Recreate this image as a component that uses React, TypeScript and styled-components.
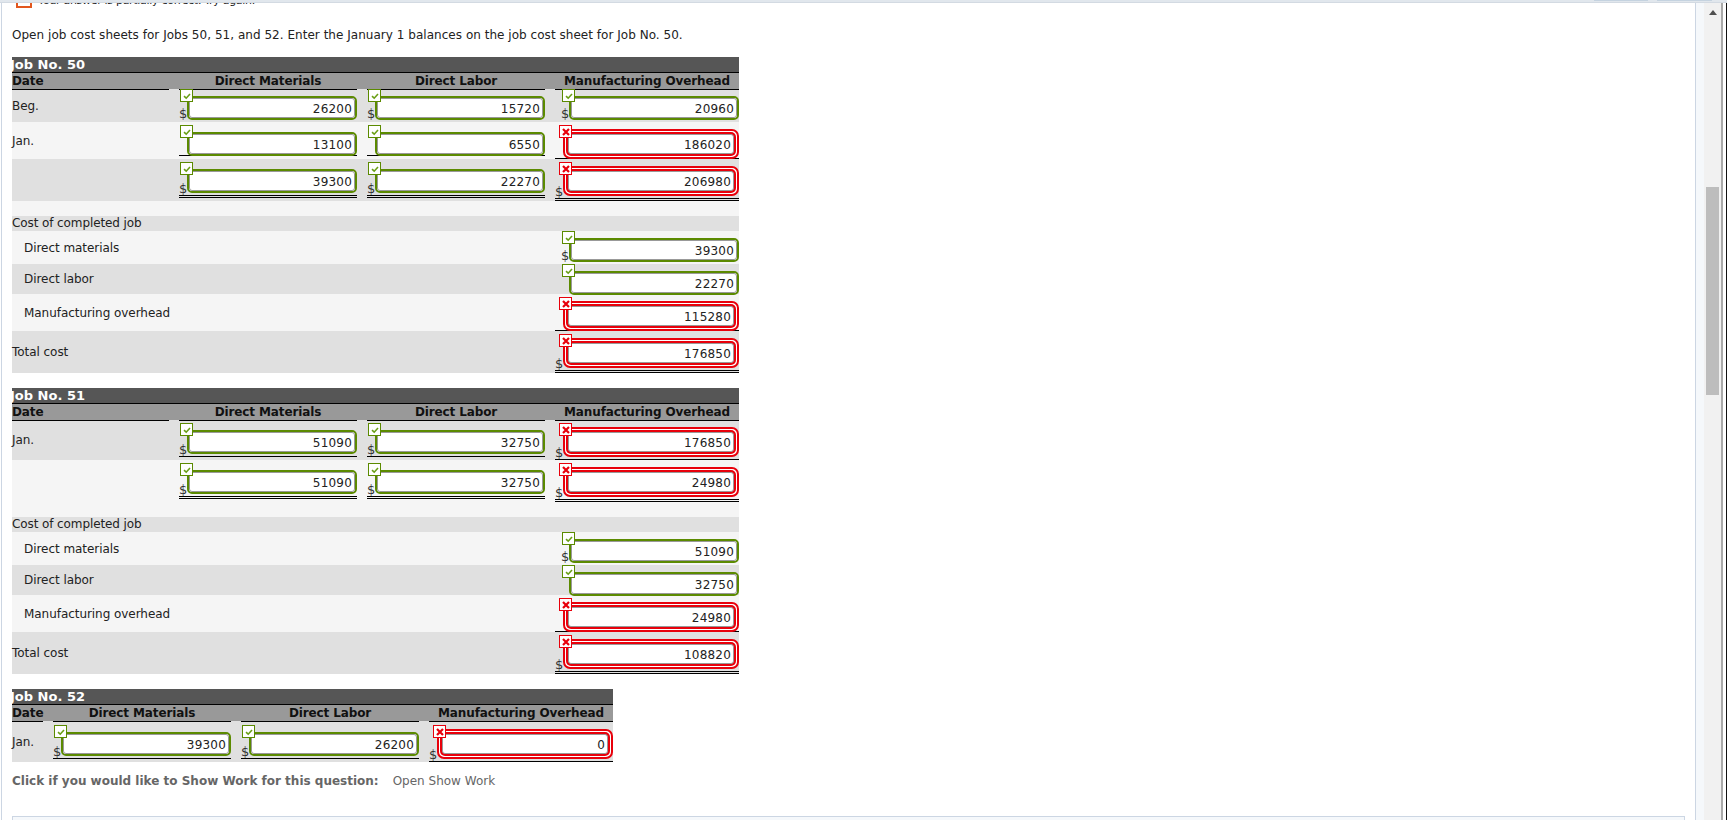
import React from "react";
import styled, { createGlobalStyle } from "styled-components";

const GlobalStyle = createGlobalStyle`
  html, body { margin: 0; padding: 0; overflow: hidden; background: #fff; }
  body { font-family: "DejaVu Sans", Verdana, sans-serif; font-size: 12px; color: #222; }
`;

const Page = styled.div`
  width: 1727px;
  height: 820px;
  display: flex;
  flex-direction: column;
  overflow: hidden;
`;
const TopBand = styled.div`
  height: 3px;
  flex: none;
  box-sizing: border-box;
  background: #e1e7ed;
  border-bottom: 1px solid #d3dae2;
  display: flex;
  justify-content: flex-end;
  gap: 9px;
  padding-right: 15px;
`;
const BandTab = styled.div<{ $w: number }>`
  width: ${(p) => p.$w}px;
  height: 1px;
  background: #c5d3e0;
`;
const Main = styled.div`
  flex: 1;
  min-height: 0;
  display: flex;
  padding-left: 1px;
`;
const Panel = styled.div`
  width: 1695px;
  flex: none;
  box-sizing: border-box;
  border-left: 1px solid #ccd6e3;
  border-right: 1px solid #ccd6e3;
  padding: 0 10px;
  overflow: hidden;
`;
const Gutter = styled.div`
  width: 8px;
  flex: none;
  background: #f5f8fb;
`;
const ScrollTrack = styled.div`
  width: 17px;
  flex: none;
  box-sizing: border-box;
  background: #f1f1f1;
  padding: 7px 2px 0;
  display: flex;
  flex-direction: column;
  align-items: center;
`;
const ScrollArrow = styled.svg`
  width: 8px;
  height: 5px;
  flex: none;
  fill: #505050;
`;
const ScrollThumb = styled.div`
  width: 13px;
  height: 208px;
  flex: none;
  margin-top: 172px;
  background: #bdbdbd;
`;
const WindowEdge = styled.div`
  flex: 1;
  box-sizing: border-box;
  border-left: 2px solid #a9a9a9;
  border-right: 1px solid #111;
  background: #fff;
`;
const Notice = styled.div`
  height: 5px;
  margin-left: -10px;
  padding-left: 14px;
  display: flex;
  align-items: flex-end;
  gap: 6px;
  overflow: hidden;
  font-size: 11px;
  letter-spacing: -0.3px;
  line-height: 14px;
`;
const NoticeBox = styled.span`
  width: 16px;
  height: 16px;
  flex: none;
  box-sizing: border-box;
  border: 2px solid #e2571e;
`;
const Intro = styled.p`
  margin: 20px 0 15px;
  font-size: 12px;
  line-height: 14px;
  letter-spacing: 0.03px;
  color: #222;
`;
const Sheet = styled.section<{ $narrow?: boolean }>`
  width: ${(p) => (p.$narrow ? 601 : 727)}px;
  margin-bottom: 15px;
  --date: ${(p) => (p.$narrow ? 31 : 157)}px;
`;
const JobBar = styled.div`
  height: 16px;
  box-sizing: border-box;
  background: #565656;
  border-bottom: 1px solid #000;
  color: #fff;
  font-weight: 700;
  font-size: 13px;
  line-height: 15px;
  text-indent: -2px;
  overflow: hidden;
`;
const Columns = styled.div`
  display: grid;
  grid-template-columns: var(--date) 178px 178px 184px;
  column-gap: 10px;
`;
const HeadRow = styled(Columns)`
  height: 16px;
  background: #999;
`;
const HeadCell = styled.div<{ $left?: boolean }>`
  box-sizing: border-box;
  border-bottom: 1px solid #000;
  text-align: ${(p) => (p.$left ? "left" : "center")};
  font-weight: 700;
  font-size: 12px;
  line-height: 16px;
  letter-spacing: -0.12px;
  color: #111;
  white-space: nowrap;
`;
const Row = styled(Columns)<{ $h: number; $alt?: boolean }>`
  height: ${(p) => p.$h}px;
  background: ${(p) => (p.$alt ? "#f5f5f5" : "#e0e0e0")};
  align-items: start;
`;
const Band = styled.div<{ $alt?: boolean }>`
  height: 15px;
  background: ${(p) => (p.$alt ? "#f5f5f5" : "#e0e0e0")};
  font-size: 12px;
  letter-spacing: -0.1px;
  line-height: 15px;
  color: #222;
`;
const RowLabel = styled.div<{ $top: number; $indent?: boolean; $wide?: boolean }>`
  padding: ${(p) => p.$top}px 0 0 ${(p) => (p.$indent ? 12 : 0)}px;
  grid-column: ${(p) => (p.$wide ? "1 / span 3" : "auto")};
  font-size: 12px;
  letter-spacing: -0.05px;
  line-height: 14px;
  color: #222;
  white-space: nowrap;
`;
type Under = "none" | "single" | "double";
const MoneyCell = styled.div<{ $top: number; $under: Under }>`
  display: flex;
  justify-content: flex-end;
  align-items: flex-end;
  padding-top: ${(p) => p.$top}px;
  border-bottom: ${(p) =>
    p.$under === "single" ? "1px solid #000" : p.$under === "double" ? "3px double #000" : "0"};
`;
const Dollar = styled.span`
  font-size: 13px;
  line-height: 13px;
  width: 8px;
  flex: none;
  color: #333;
`;
const Field = styled.div<{ $bad: boolean; $overlap: boolean; $under: Under }>`
  position: relative;
  flex: none;
  width: ${(p) => (p.$bad ? 176 : 170)}px;
  height: ${(p) => (p.$bad ? 30 : 24)}px;
  margin-top: ${(p) => (p.$bad ? 4 : 7)}px;
  margin-bottom: ${(p) => (p.$under === "none" ? 0 : p.$overlap ? -1 : 2)}px;
`;
const Frame = styled.div<{ $bad: boolean }>`
  height: 100%;
  box-sizing: border-box;
  display: flex;
  background: #fff;
  border: 2px solid ${(p) => (p.$bad ? "#e8000b" : "#5b8a00")};
  border-radius: ${(p) => (p.$bad ? 7 : 5)}px;
  padding: ${(p) => (p.$bad ? 3 : 0)}px;
`;
const Amount = styled.div<{ $bad: boolean }>`
  flex: 1;
  box-sizing: border-box;
  background: #fff;
  border: 1px solid #999;
  border-radius: 3px;
  padding-right: 2px;
  text-align: right;
  font-size: 12px;
  line-height: ${(p) => (p.$bad ? 20 : 20)}px;
  letter-spacing: 0.2px;
  color: #222;
  box-shadow: ${(p) => (p.$bad ? "0 0 0 2px #e8000b" : "none")};
`;
const Badge = styled.span<{ $bad: boolean }>`
  position: absolute;
  left: ${(p) => (p.$bad ? -4 : -7)}px;
  top: ${(p) => (p.$bad ? -4 : -7)}px;
  width: 13px;
  height: 13px;
  box-sizing: border-box;
  background: #fff;
  border: 1.5px solid ${(p) => (p.$bad ? "#e8000b" : "#5b8a00")};
  display: flex;
  align-items: center;
  justify-content: center;
`;
const BadgeIcon = styled.svg`
  width: 10px;
  height: 10px;
  fill: none;
`;
const ShowWork = styled.div`
  margin-top: -3px;
  display: flex;
  gap: 14px;
  font-size: 12px;
  line-height: 14px;
  color: #666;
`;
const ShowWorkTitle = styled.strong`
  font-weight: 700;
`;
const FooterBox = styled.div`
  margin-top: 28px;
  height: 60px;
  box-sizing: border-box;
  border: 1px solid #ccd6e3;
  background: #f5f8fb;
`;

type Money = { v: string; bad?: boolean; dollar?: boolean; under?: Under; overlap?: boolean };

function MoneyBox({ m, top }: { m: Money; top: number }) {
  const bad = !!m.bad;
  const under = m.under ?? "none";
  return (
    <MoneyCell $top={top} $under={under}>
      <Dollar>{m.dollar ? "$" : ""}</Dollar>
      <Field $bad={bad} $overlap={!!m.overlap} $under={under}>
        <Frame $bad={bad}>
          <Amount $bad={bad}>{m.v}</Amount>
        </Frame>
        <Badge $bad={bad}>
          <BadgeIcon viewBox="0 0 10 10">
            {bad ? (
              <path d="M2 2L8 8M8 2L2 8" stroke="#e8000b" strokeWidth="2.2" />
            ) : (
              <path d="M2 5.2L4.2 7.2L8 3" stroke="#6a9f16" strokeWidth="1.6" />
            )}
          </BadgeIcon>
        </Badge>
      </Field>
    </MoneyCell>
  );
}

const g = (v: string, dollar: boolean, under: Under = "none", overlap = false): Money => ({ v, dollar, under, overlap });
const r = (v: string, dollar: boolean, under: Under = "none", overlap = false): Money => ({ v, dollar, under, overlap, bad: true });

type LineRow = { label: string; top: number; labelTop: number; h: number; alt?: boolean; cells: Money[] };
type CostRow = { label: string; labelTop: number; h: number; top: number; alt?: boolean; indent?: boolean; cell: Money };

function CostRows({ rows }: { rows: CostRow[] }) {
  return (
    <>
      <Band>Cost of completed job</Band>
      {rows.map((c) => (
        <Row key={c.label} $h={c.h} $alt={c.alt}>
          <RowLabel $wide $indent={c.indent} $top={c.labelTop}>{c.label}</RowLabel>
          <MoneyBox m={c.cell} top={c.top} />
        </Row>
      ))}
    </>
  );
}

function JobSheet({ title, narrow, rows, children }: { title: string; narrow?: boolean; rows: LineRow[]; children?: React.ReactNode }) {
  return (
    <Sheet $narrow={narrow}>
      <JobBar>{title}</JobBar>
      <HeadRow>
        <HeadCell $left>Date</HeadCell>
        <HeadCell>Direct Materials</HeadCell>
        <HeadCell>Direct Labor</HeadCell>
        <HeadCell>Manufacturing Overhead</HeadCell>
      </HeadRow>
      {rows.map((row, i) => (
        <Row key={i} $h={row.h} $alt={row.alt}>
          <RowLabel $top={row.labelTop}>{row.label}</RowLabel>
          {row.cells.map((m, j) => (
            <MoneyBox key={j} m={m} top={row.top} />
          ))}
        </Row>
      ))}
      {children}
    </Sheet>
  );
}

const costRows = (dm: Money, dl: Money, mo: Money, total: Money): CostRow[] => [
  { label: "Direct materials", labelTop: 10, h: 33, top: 0, alt: true, indent: true, cell: dm },
  { label: "Direct labor", labelTop: 8, h: 30, top: 0, indent: true, cell: dl },
  { label: "Manufacturing overhead", labelTop: 12, h: 37, top: 3, alt: true, indent: true, cell: mo },
  { label: "Total cost", labelTop: 14, h: 42, top: 3, cell: total },
];

const job50: LineRow[] = [
  { label: "Beg.", top: 0, labelTop: 10, h: 33, cells: [g("26200", true), g("15720", true), g("20960", true)] },
  { label: "Jan.", top: 3, labelTop: 12, h: 37, alt: true, cells: [g("13100", false, "single", true), g("6550", false, "single", true), r("186020", false, "single", true)] },
  { label: "", top: 3, labelTop: 0, h: 42, cells: [g("39300", true, "double"), g("22270", true, "double"), r("206980", true, "double")] },
];
const job51: LineRow[] = [
  { label: "Jan.", top: 3, labelTop: 13, h: 40, cells: [g("51090", true, "single"), g("32750", true, "single"), r("176850", true, "single")] },
  { label: "", top: 3, labelTop: 0, h: 57, alt: true, cells: [g("51090", true, "double"), g("32750", true, "double"), r("24980", true, "double")] },
];
const job52: LineRow[] = [
  { label: "Jan.", top: 4, labelTop: 14, h: 41, cells: [g("39300", true, "single"), g("26200", true, "single"), r("0", true, "single")] },
];

export default function App() {
  return (
    <Page>
      <GlobalStyle />
      <TopBand>
        <BandTab $w={54} />
        <BandTab $w={55} />
      </TopBand>
      <Main>
        <Panel>
          <Notice>
            <NoticeBox />
            <span>Your answer is partially correct. Try again.</span>
          </Notice>
          <Intro>Open job cost sheets for Jobs 50, 51, and 52. Enter the January 1 balances on the job cost sheet for Job No. 50.</Intro>
          <JobSheet title="Job No. 50" rows={job50}>
            <Band $alt />
            <CostRows rows={costRows(g("39300", true), g("22270", false), r("115280", false, "single", true), r("176850", true, "double"))} />
          </JobSheet>
          <JobSheet title="Job No. 51" rows={job51}>
            <CostRows rows={costRows(g("51090", true), g("32750", false), r("24980", false, "single", true), r("108820", true, "double"))} />
          </JobSheet>
          <JobSheet title="Job No. 52" narrow rows={job52} />
          <ShowWork>
            <ShowWorkTitle>Click if you would like to Show Work for this question:</ShowWorkTitle>
            <span>Open Show Work</span>
          </ShowWork>
          <FooterBox />
        </Panel>
        <Gutter />
        <ScrollTrack>
          <ScrollArrow viewBox="0 0 8 5"><path d="M4 0L8 5H0Z" /></ScrollArrow>
          <ScrollThumb />
        </ScrollTrack>
        <WindowEdge />
      </Main>
    </Page>
  );
}
